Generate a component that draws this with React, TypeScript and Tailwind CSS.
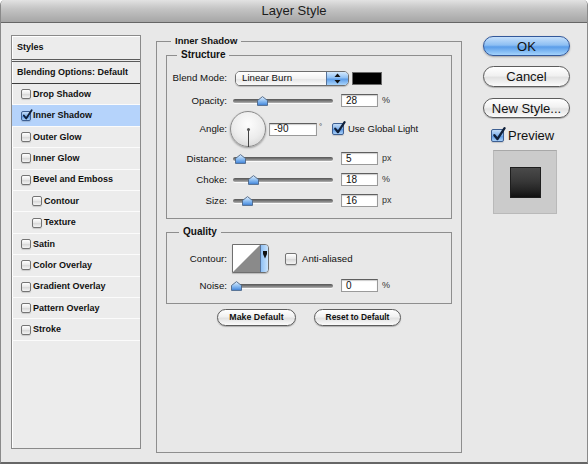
import React from 'react';

const styleItems: { name: string; checked?: boolean; active?: boolean; indent?: boolean }[] = [
  { name: 'Drop Shadow' },
  { name: 'Inner Shadow', checked: true, active: true },
  { name: 'Outer Glow' },
  { name: 'Inner Glow' },
  { name: 'Bevel and Emboss' },
  { name: 'Contour', indent: true },
  { name: 'Texture', indent: true },
  { name: 'Satin' },
  { name: 'Color Overlay' },
  { name: 'Gradient Overlay' },
  { name: 'Pattern Overlay' },
  { name: 'Stroke' },
];

function Checkbox({ size = 11, checked = false }: { size?: number; checked?: boolean }) {
  return (
    <div
      className={
        'relative shrink-0 rounded-[2px] border shadow-[0_1px_1px_rgba(0,0,0,0.15)] ' +
        (checked
          ? 'border-[#3d5f92] bg-[linear-gradient(#c3dcf7,#7fb0ea_50%,#5b97e2_55%,#a9d0f8)]'
          : 'border-[#747474] bg-[linear-gradient(#ffffff,#e6e6e6_50%,#d9d9d9_55%,#f4f4f4)]')
      }
      style={{ width: size, height: size }}
    >
      {checked && (
        <svg
          className="absolute left-0 top-[-2px] overflow-visible"
          width={size}
          height={size}
          viewBox="0 0 12 12"
        >
          <path d="M2.2 6.6 L5 10.2 L11.6 0.2" fill="none" stroke="#10203a" strokeWidth="2.2" strokeLinecap="round" strokeLinejoin="round" />
        </svg>
      )}
    </div>
  );
}

function Field({ value, w = 37 }: { value: string; w?: number }) {
  return (
    <div
      className="h-[13px] shrink-0 bg-white border border-[#9a9a9a] border-t-[#5f5f5f] shadow-[inset_0_1px_1px_rgba(0,0,0,0.2)] pl-[4px] flex items-center text-[10px] leading-none text-[#111]"
      style={{ width: w }}
    >
      {value}
    </div>
  );
}

// thumb: absolute x of thumb centre in the dialog
function Slider({ thumb }: { thumb: number }) {
  return (
    <div className="relative ml-[4px] w-[104px] h-[13px] flex items-center shrink-0">
      <div className="mx-[2px] flex-1 h-[4px] rounded-full bg-[linear-gradient(#565656,#7a7a7a_50%,#b4b4b4)] shadow-[0_1px_0_rgba(255,255,255,0.8)]" />
      <svg className="absolute top-[2px]" style={{ left: thumb - 231 - 5.5 }} width="11" height="10" viewBox="0 0 11 10">
        <defs>
          <linearGradient id={'tg' + thumb} x1="0" y1="0" x2="0" y2="1">
            <stop offset="0" stopColor="#e3f0fd" />
            <stop offset="0.5" stopColor="#8fbff2" />
            <stop offset="1" stopColor="#3f85dc" />
          </linearGradient>
        </defs>
        <path d="M0.5 4.5 L5.5 0.6 L10.5 4.5 L10.5 9.4 L0.5 9.4 Z" fill={'url(#tg' + thumb + ')'} stroke="#4d6585" strokeWidth="0.9" />
      </svg>
    </div>
  );
}

function Label({ children }: { children: React.ReactNode }) {
  return <div className="w-[60px] shrink-0 text-right text-[9.7px] leading-none text-[#111]">{children}</div>;
}

function SliderRow({ label, thumb, value, unit, mt }: { label: string; thumb: number; value: string; unit: string; mt: string }) {
  return (
    <div className={'flex items-center h-[13px] ' + mt}>
      <Label>{label}</Label>
      <Slider thumb={thumb} />
      <div className="ml-[6px]">
        <Field value={value} />
      </div>
      <div className="ml-[4px] text-[9px] leading-none text-[#333]">{unit}</div>
    </div>
  );
}

function Pill({ children, className = '' }: { children: React.ReactNode; className?: string }) {
  return (
    <div
      className={
        'flex items-center justify-center rounded-full border border-[#5c5c5c] bg-[linear-gradient(#ffffff,#f1f1f1_45%,#e2e2e2_55%,#fbfbfb)] shadow-[0_1px_1px_rgba(0,0,0,0.25)] ' +
        className
      }
    >
      {children}
    </div>
  );
}

export default function App() {
  return (
    <div className="w-[588px] h-[466px] bg-white overflow-hidden font-['Liberation_Sans',Arial,sans-serif] text-[#111]">
      <div className="w-[588px] h-[464px] flex flex-col border-x border-[#8a8a8a] border-b-2 border-b-[#666] rounded-t-[5px] overflow-hidden bg-[#e8e8e8]">
        {/* Title bar */}
        <div className="h-[23px] shrink-0 flex items-center justify-center bg-[linear-gradient(#e2e2e2,#c4c4c4_40%,#a6a6a6)] border-b border-[#666] text-[13px] text-[#1b1b1b]">
          Layer Style
        </div>

        <div className="flex-1 flex items-start">
          {/* Styles list */}
          <div className="ml-[10px] mt-[12px] w-[130px] h-[414px] border border-[#8a8a8a] bg-[#ececec] flex flex-col shadow-[inset_1px_1px_0_#fff]">
            <div className="h-[26px] shrink-0 pl-[5px] flex items-center border-b-[3px] border-double border-[#5a5a5a] text-[9px] font-bold leading-none">
              Styles
            </div>
            <div className="h-[22px] shrink-0 pl-[5px] flex items-center border-b border-[#3c3c3c] text-[9px] font-bold leading-none">
              Blending Options: Default
            </div>
            {styleItems.map((it) => (
              <div
                key={it.name}
                className={
                  'h-[21.42px] shrink-0 flex items-center border-b border-[#fbfbfb] text-[9px] font-bold leading-none ' +
                  (it.indent ? 'pl-[20px] ' : 'pl-[9px] ') +
                  (it.active ? 'bg-[#b5d3fb]' : '')
                }
              >
                <Checkbox size={10} checked={it.checked} />
                <span className="ml-[2px]">{it.name}</span>
              </div>
            ))}
          </div>

          {/* Inner Shadow panel */}
          <fieldset className="ml-[15px] mt-[12px] w-[306px] h-[418px] border border-[#8e8e8e] p-0 min-w-0">
            <legend className="ml-[14px] px-[4px] text-[9.5px] font-bold leading-[12px]">Inner Shadow</legend>
            <div className="px-[9px] pt-[2px] flex flex-col">
              <fieldset className="w-[286px] h-[170px] border border-[#8e8e8e] p-0 min-w-0">
                <legend className="ml-[10px] px-[4px] text-[10px] font-bold leading-[12px]">Structure</legend>
                <div className="flex flex-col">
                  {/* Blend mode */}
                  <div className="mt-[10px] h-[14px] flex items-center">
                    <Label>Blend Mode:</Label>
                    <div className="ml-[8px] w-[114px] h-[15px] flex rounded-[5px] border border-[#6e6e6e] overflow-hidden shadow-[0_1px_1px_rgba(0,0,0,0.2)]">
                      <div className="flex-1 flex items-center pl-[6px] text-[9.7px] leading-none bg-[linear-gradient(#ffffff,#f2f2f2_50%,#e6e6e6_55%,#fafafa)]">
                        Linear Burn
                      </div>
                      <div className="w-[22px] flex items-center justify-center border-l border-[#55729a] bg-[linear-gradient(#d4e9fd,#8fc0f4_45%,#5d9de8_55%,#a9d4fb)]">
                        <svg width="7" height="11" viewBox="0 0 7 11">
                          <path d="M3.5 0.5 L6.5 4 L0.5 4 Z" fill="#111" />
                          <path d="M0.5 7 L6.5 7 L3.5 10.5 Z" fill="#111" />
                        </svg>
                      </div>
                    </div>
                    <div className="ml-[3px] w-[30px] h-[13px] bg-black border border-[#6a6a6a]" />
                  </div>

                  <SliderRow label="Opacity:" thumb={262} value="28" unit="%" mt="mt-[9px]" />

                  {/* Angle */}
                  <div className="mt-[4px] h-[36px] flex items-center">
                    <Label>Angle:</Label>
                    <div className="relative ml-[3px] w-[36px] h-[36px] shrink-0 rounded-full border border-[#8a8a8a] bg-[radial-gradient(circle_at_50%_35%,#fdfdfd,#ececec_55%,#cfcfcf)] shadow-[0_1px_2px_rgba(0,0,0,0.35)]">
                      <div className="absolute left-[16.5px] top-[17px] w-px h-[18px] bg-[#444]" />
                      <div className="absolute left-[15.5px] top-[15.5px] w-[3px] h-[3px] rounded-full bg-[#555]" />
                    </div>
                    <div className="ml-[3px]">
                      <Field value="-90" w={48} />
                    </div>
                    <div className="w-[15px] h-[13px] pl-[2px] text-[8px] leading-none text-[#333]">°</div>
                    <Checkbox size={12} checked />
                    <div className="ml-[4px] text-[9.5px] leading-none">Use Global Light</div>
                  </div>

                  <SliderRow label="Distance:" thumb={240} value="5" unit="px" mt="mt-[5px]" />
                  <SliderRow label="Choke:" thumb={253} value="18" unit="%" mt="mt-[8px]" />
                  <SliderRow label="Size:" thumb={247} value="16" unit="px" mt="mt-[8px]" />
                </div>
              </fieldset>

              <fieldset className="mt-[7px] w-[286px] h-[78px] border border-[#8e8e8e] p-0 min-w-0">
                <legend className="ml-[12px] px-[4px] text-[10px] font-bold leading-[12px]">Quality</legend>
                <div className="flex flex-col">
                  <div className="mt-[6px] h-[29px] flex items-center">
                    <Label>Contour:</Label>
                    <div className="ml-[5px] w-[37px] h-[29px] flex border border-[#6f6f6f] rounded-r-[4px] overflow-hidden shadow-[0_1px_1px_rgba(0,0,0,0.2)]">
                      <svg width="27" height="27" viewBox="0 0 27 27" className="shrink-0 bg-white">
                        <path d="M0 27 L27 0 L27 27 Z" fill="#8a8a8a" />
                      </svg>
                      <div className="flex-1 flex items-start justify-center pt-[6px] border-l border-[#55729a] bg-[linear-gradient(90deg,#8fc0f4,#c9e3fc)]">
                        <svg width="4" height="8" viewBox="0 0 4 8">
                          <path d="M0 0 H4 V3 L2 7.5 L0 3 Z" fill="#111" />
                        </svg>
                      </div>
                    </div>
                    <div className="ml-[16px]">
                      <Checkbox size={12} />
                    </div>
                    <div className="ml-[5px] text-[9.7px] leading-none">Anti-aliased</div>
                  </div>
                  <SliderRow label="Noise:" thumb={236} value="0" unit="%" mt="mt-[6px]" />
                </div>
              </fieldset>

              <div className="mt-[5px] flex justify-center gap-[18px]">
                <Pill className="w-[79px] h-[17px] text-[8.8px] font-bold leading-none">Make Default</Pill>
                <Pill className="w-[87px] h-[17px] text-[8.4px] font-bold leading-none">Reset to Default</Pill>
              </div>
            </div>
          </fieldset>

          {/* Buttons */}
          <div className="ml-[21px] mt-[13px] w-[87px] flex flex-col">
            <div className="h-[20px] flex items-center justify-center rounded-full border border-[#33589a] bg-[linear-gradient(#c6e0fb,#8dbff3_45%,#5a9de9_55%,#a4d3fc)] shadow-[0_1px_2px_rgba(0,0,0,0.3)] text-[13px] leading-none">
              OK
            </div>
            <Pill className="mt-[10px] h-[21px] text-[13px] leading-none">Cancel</Pill>
            <Pill className="mt-[11px] h-[20px] text-[13px] leading-none">New Style...</Pill>
            <div className="mt-[10px] h-[15px] pl-[8px] flex items-center">
              <Checkbox size={13} checked />
              <span className="ml-[4px] text-[13px] leading-none">Preview</span>
            </div>
            <div className="mt-[7px] ml-[10px] w-[64px] h-[64px] flex items-center justify-center bg-[#cbcbcb] border border-[#b9b9b9] border-t-[#a8a8a8]">
              <div className="w-[31px] h-[31px] border border-[#1e1e1e] bg-[linear-gradient(#4a4a4a,#383838_45%,#222_80%,#111)]" />
            </div>
          </div>
        </div>
      </div>
    </div>
  );
}
